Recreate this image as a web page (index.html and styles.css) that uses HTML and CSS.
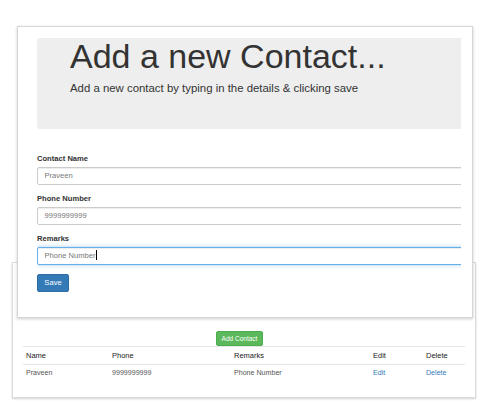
FILE: index.html
```html
<!DOCTYPE html>
<html lang="en">
<head>
<meta charset="utf-8">
<title>Contacts</title>
<link rel="stylesheet" href="styles.css">
</head>
<body>
<div class="page">
  <section class="card">
    <div class="toolbar">
      <button class="btn btn-success" type="button">Add Contact</button>
    </div>
    <table class="table">
      <colgroup>
        <col class="c-name"><col class="c-phone"><col class="c-remarks"><col class="c-edit"><col class="c-delete">
      </colgroup>
      <thead>
        <tr><th>Name</th><th>Phone</th><th>Remarks</th><th>Edit</th><th>Delete</th></tr>
      </thead>
      <tbody>
        <tr><td>Praveen</td><td>9999999999</td><td>Phone Number</td><td><a href="#">Edit</a></td><td><a href="#">Delete</a></td></tr>
      </tbody>
    </table>
  </section>

  <div class="modal">
    <div class="clip">
      <div class="jumbotron">
        <h1>Add a new Contact...</h1>
        <p>Add a new contact by typing in the details &amp; clicking save</p>
      </div>
      <form class="form">
        <div class="group">
          <label>Contact Name</label>
          <div class="field">Praveen</div>
        </div>
        <div class="group">
          <label>Phone Number</label>
          <div class="field">9999999999</div>
        </div>
        <div class="group">
          <label>Remarks</label>
          <div class="field focus">Phone Number<span class="caret"></span></div>
        </div>
        <button class="btn btn-primary" type="button">Save</button>
      </form>
    </div>
  </div>
</div>
</body>
</html>
```
FILE: styles.css
```css
* { box-sizing: border-box; }
html, body { margin: 0; padding: 0; background: #fff; }
body {
  font-family: "Liberation Sans", Arial, sans-serif;
  font-size: 7.6px;
  line-height: 10.8px;
  color: #333;
}
.page {
  position: relative;
  width: 498px;
  height: 407px;
  padding: 262px 22px 0 12px;
}
.card {
  border: 1px solid #dcdcdc;
  box-shadow: 0 1px 2px rgba(0,0,0,0.18);
  background: #fff;
  padding: 68px 10px 15px 10px;
}
.toolbar { margin-left: 193px; height: 15px; }
.btn {
  font-family: inherit;
  display: inline-block;
  border: 1px solid transparent;
  border-radius: 2px;
  color: #fff;
  cursor: pointer;
  margin: 0;
}
.btn-success {
  background: #5cb85c;
  border-color: #4cae4c;
  font-size: 6.5px;
  height: 15px;
  width: 47px;
  padding: 0;
  line-height: 13px;
  vertical-align: top;
}
.btn-primary {
  background: #337ab7;
  border-color: #2e6da4;
  font-size: 7.6px;
  height: 18.4px;
  width: 32px;
  padding: 0;
  line-height: 16px;
}
.table {
  width: 100%;
  border-collapse: collapse;
  table-layout: fixed;
  font-size: 7.3px;
}
.c-name { width: 86px; }
.c-phone { width: 122px; }
.c-remarks { width: 139px; }
.c-edit { width: 53px; }
.c-delete { width: auto; }
.table th, .table td {
  text-align: left;
  padding: 3px 3px;
  line-height: 11px;
  border-top: 1px solid #e6e6e6;
  white-space: nowrap;
}
.table th { font-weight: normal; color: #222; font-size: 7.5px; }
.table td { color: #555; font-size: 7.1px; }
.table a { color: #337ab7; text-decoration: none; }

.modal {
  position: absolute;
  left: 17px;
  top: 26px;
  width: 456px;
  background: #fff;
  border: 1px solid #d6d6d6;
  box-shadow: 0 1px 3px rgba(0,0,0,0.2);
  padding: 0 11px 25px 19px;
}
.clip { overflow: hidden; padding-top: 11px; }
.jumbotron {
  display: flow-root;
  margin-right: -10px;
  background: #eee;
  border-radius: 3px;
  height: 91px;
  padding: 0 33px;
}
.jumbotron h1 {
  margin: -1.3px 0 0 0;
  font-size: 34px;
  line-height: 38px;
  font-weight: normal;
  color: #333;
  white-space: nowrap;
}
.jumbotron p {
  margin: 5.5px 0 0 0;
  font-size: 11.4px;
  line-height: 16.3px;
  color: #333;
  white-space: nowrap;
}
.form { margin-top: 24.6px; }
.group { margin-bottom: 8.1px; }
.group label {
  display: block;
  font-weight: bold;
  font-size: 7.6px;
  line-height: 10.8px;
  margin-bottom: 2.7px;
  color: #333;
}
.field {
  margin-right: -10px;
  height: 18.4px;
  border: 1px solid #ccc;
  border-radius: 2px;
  padding: 0 6.5px;
  line-height: 16.4px;
  font-size: 7.6px;
  color: #777;
  box-shadow: inset 0 1px 1px rgba(0,0,0,0.075);
  background: #fff;
}
.field.focus {
  border-color: #66afe9;
  box-shadow: inset 0 1px 1px rgba(0,0,0,0.075), 0 0 4px rgba(102,175,233,0.6);
}
.caret {
  display: inline-block;
  width: 1px;
  height: 10px;
  background: #000;
  vertical-align: -2px;
}
```
